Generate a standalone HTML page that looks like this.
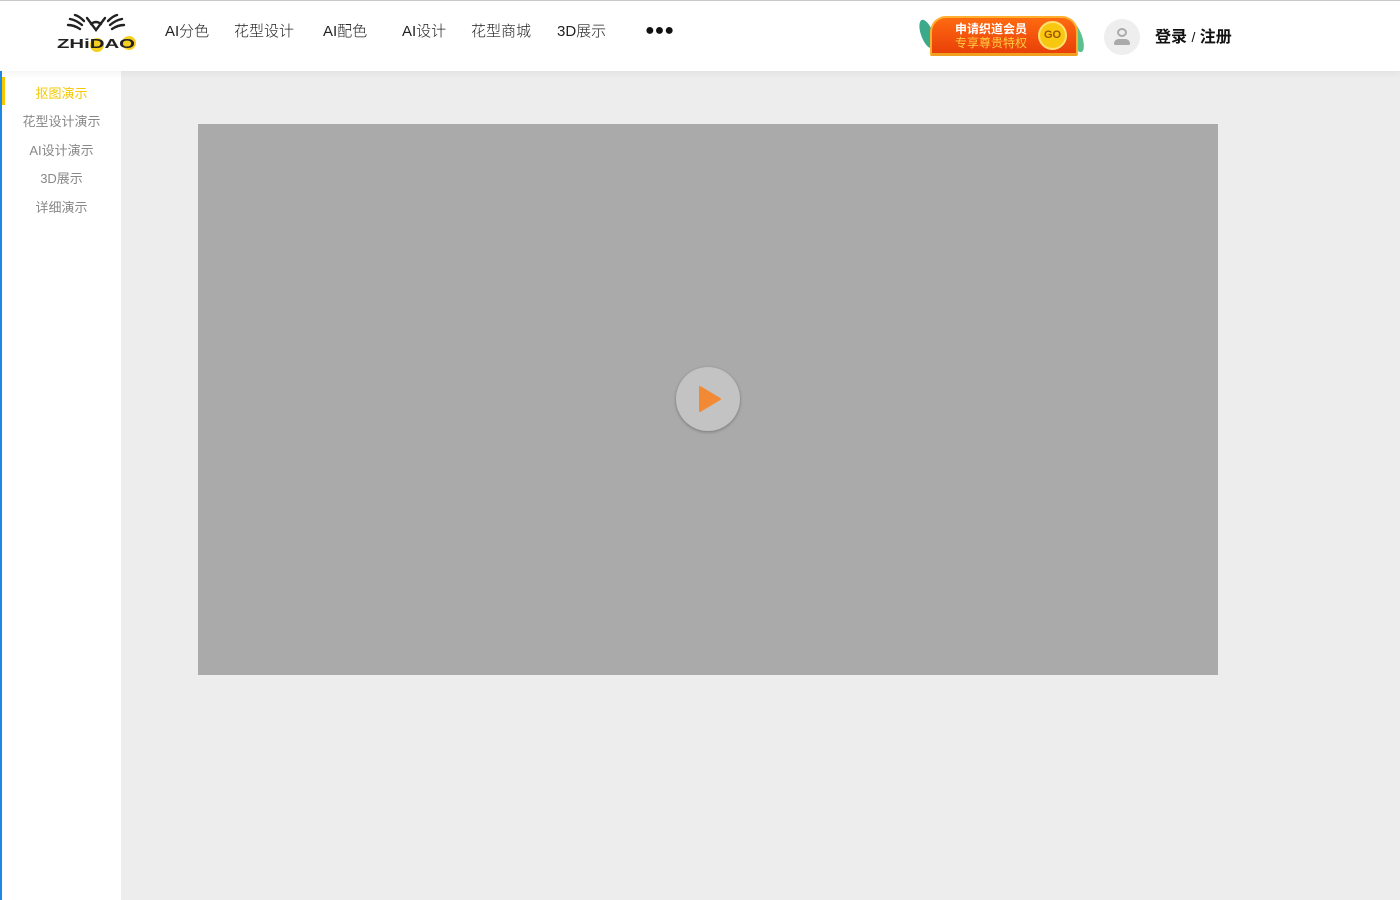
<!DOCTYPE html>
<html><head><meta charset="utf-8"><style>
*{margin:0;padding:0;box-sizing:border-box}
body{width:1400px;height:900px;overflow:hidden;background:#ededed;font-family:"Liberation Sans","Noto Sans CJK SC",sans-serif;position:relative}
.hdr{position:absolute;left:0;top:0;width:1400px;height:71px;background:#fff;border-top:1px solid #c8c8c8;box-shadow:0 2px 8px rgba(0,0,0,.06);z-index:2}
.nav{position:absolute;top:19px;font-size:15px;color:#222;font-weight:300}
.side{position:absolute;left:0;top:71px;width:121px;height:829px;background:#fff;border-left:2px solid #1e88e5}
.side div{position:absolute;left:0;width:119px;text-align:center;font-size:13px;color:#888}
.vid{position:absolute;left:198px;top:124px;width:1020px;height:551px;background:#aaa}
</style></head><body>
<div class="hdr">
<svg style="position:absolute;left:50px;top:5px" width="95" height="50" viewBox="0 0 95 50">
<circle cx="47" cy="39" r="7" fill="#f5d020"/>
<circle cx="79" cy="37" r="7" fill="#f5d020"/>
<g stroke="#222" stroke-width="2.4" fill="none" stroke-linecap="round">
<path d="M37 12 L46 24 L55 12"/>
<path d="M41 18 Q46 14 51 18"/>
<path d="M34 15 Q29 10 25 9"/><path d="M32 19 Q26 14 20 13"/><path d="M30 23 Q24 19 18 19"/>
<path d="M58 15 Q63 10 67 9"/><path d="M60 19 Q66 14 72 13"/><path d="M62 23 Q68 19 74 19"/>
</g>
<text x="7" y="42" font-family="Liberation Sans" font-weight="bold" font-size="13" fill="#222" textLength="78" lengthAdjust="spacingAndGlyphs">ZHiDAO</text>
</svg>
<div class="nav" style="left:165px">AI分色</div>
<div class="nav" style="left:234px">花型设计</div>
<div class="nav" style="left:323px">AI配色</div>
<div class="nav" style="left:402px">AI设计</div>
<div class="nav" style="left:471px">花型商城</div>
<div class="nav" style="left:557px">3D展示</div>
<div class="nav" style="left:645px;top:21px;font-size:16px;letter-spacing:0px;color:#111">●●●</div>
<div style="position:absolute;left:921px;top:18px;width:12px;height:30px;background:#3aaa8a;border-radius:50%;transform:rotate(-20deg)"></div>
<div style="position:absolute;left:1070px;top:20px;width:12px;height:32px;background:#5cc08c;border-radius:50%;transform:rotate(-20deg)"></div>
<div style="position:absolute;left:930px;top:15px;width:148px;height:40px;background:linear-gradient(#ff6a10,#e8400a);border-radius:16px 16px 2px 2px;border:2px solid #ffb030;border-bottom:3px solid #f0a020"></div>
<div style="position:absolute;left:955px;top:21px;font-size:12px;font-weight:bold;color:#fff;line-height:14px">申请织道会员</div>
<div style="position:absolute;left:955px;top:35px;font-size:12px;color:#ffcc40;line-height:14px">专享尊贵特权</div>
<div style="position:absolute;left:1038px;top:20px;width:29px;height:29px;border-radius:50%;background:#f8c810;border:2px solid #ffe070;text-align:center;line-height:25px;font-size:11px;font-weight:bold;color:#a05000">GO</div>
<div style="position:absolute;left:1104px;top:18px;width:36px;height:36px;border-radius:50%;background:#eee"></div>
<div style="position:absolute;left:1117px;top:27px;width:10px;height:9px;border-radius:50%;border:2px solid #aaa"></div>
<div style="position:absolute;left:1114px;top:38px;width:16px;height:6px;border-radius:6px 6px 2px 2px;background:#aaa"></div>
<div style="position:absolute;left:1155px;top:22px;font-size:16px;font-weight:bold;color:#111">登录 <span style="font-weight:normal;font-size:14px">/</span> 注册</div>
</div>
<div class="side">
<div style="top:6px;width:3px;height:28px;left:0;background:#f5c800"></div>
<div style="top:12px;color:#f5c800">抠图演示</div>
<div style="top:40px">花型设计演示</div>
<div style="top:69px">AI设计演示</div>
<div style="top:97px">3D展示</div>
<div style="top:126px">详细演示</div>
</div>
<div class="vid">
<div style="position:absolute;left:478px;top:243px;width:64px;height:64px;border-radius:50%;background:#c3c3c3;box-shadow:0 1px 3px rgba(0,0,0,.3)"></div>
<svg style="position:absolute;left:499px;top:261px" width="26" height="28" viewBox="0 0 26 28"><path d="M3 2 L23 14 L3 26 Z" fill="#f28a35" stroke="#f28a35" stroke-width="2" stroke-linejoin="round"/></svg>
</div>
</body></html>
